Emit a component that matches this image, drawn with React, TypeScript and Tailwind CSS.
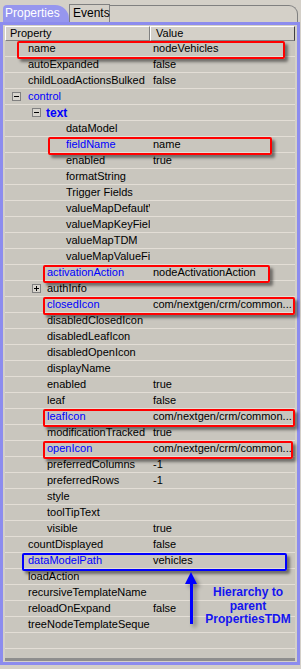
import React from 'react';

type Row = {
  label: string;
  value?: string;
  pad: string;
  blue?: boolean;
  bold?: boolean;
  toggle?: '-' | '+';
  gap?: string;
};

const L0 = 'pl-[23px]';
const L1 = 'pl-[42px]';
const L2 = 'pl-[61px]';
const ICON = 'com/nextgen/crm/common...';

const rows: Row[] = [
  { label: 'name', value: 'nodeVehicles', pad: L0 },
  { label: 'autoExpanded', value: 'false', pad: L0 },
  { label: 'childLoadActionsBulked', value: 'false', pad: L0 },
  { label: 'control', pad: 'pl-[7px]', blue: true, toggle: '-', gap: 'ml-[7px]' },
  { label: 'text', pad: 'pl-[27px]', blue: true, bold: true, toggle: '-', gap: 'ml-[5px]' },
  { label: 'dataModel', pad: L2 },
  { label: 'fieldName', value: 'name', pad: L2, blue: true },
  { label: 'enabled', value: 'true', pad: L2 },
  { label: 'formatString', pad: L2 },
  { label: 'Trigger Fields', pad: L2 },
  { label: 'valueMapDefaultValue', pad: L2 },
  { label: 'valueMapKeyField', pad: L2 },
  { label: 'valueMapTDM', pad: L2 },
  { label: 'valueMapValueField', pad: L2 },
  { label: 'activationAction', value: 'nodeActivationAction', pad: L1, blue: true },
  { label: 'authInfo', pad: 'pl-[27px]', toggle: '+', gap: 'ml-[6px]' },
  { label: 'closedIcon', value: ICON, pad: L1, blue: true },
  { label: 'disabledClosedIcon', pad: L1 },
  { label: 'disabledLeafIcon', pad: L1 },
  { label: 'disabledOpenIcon', pad: L1 },
  { label: 'displayName', pad: L1 },
  { label: 'enabled', value: 'true', pad: L1 },
  { label: 'leaf', value: 'false', pad: L1 },
  { label: 'leafIcon', value: ICON, pad: L1, blue: true },
  { label: 'modificationTracked', value: 'true', pad: L1 },
  { label: 'openIcon', value: ICON, pad: L1, blue: true },
  { label: 'preferredColumns', value: '-1', pad: L1 },
  { label: 'preferredRows', value: '-1', pad: L1 },
  { label: 'style', pad: L1 },
  { label: 'toolTipText', pad: L1 },
  { label: 'visible', value: 'true', pad: L1 },
  { label: 'countDisplayed', value: 'false', pad: L0 },
  { label: 'dataModelPath', value: 'vehicles', pad: L0, blue: true },
  { label: 'loadAction', pad: L0 },
  { label: 'recursiveTemplateName', pad: L0 },
  { label: 'reloadOnExpand', value: 'false', pad: L0 },
  { label: 'treeNodeTemplateSequence', pad: L0 },
  { label: '', pad: L0 },
  { label: '', pad: L0 },
];

// highlight boxes drawn over the grid (page coords)
const marks = [
  { cls: 'left-[17px] top-[41px] w-[268px] border-[#ff0000]' },
  { cls: 'left-[48px] top-[137px] w-[224px] border-[#ff0000]' },
  { cls: 'left-[43px] top-[265px] w-[227px] border-[#ff0000]' },
  { cls: 'left-[43px] top-[297px] w-[252px] border-[#ff0000]' },
  { cls: 'left-[43px] top-[409px] w-[252px] border-[#ff0000]' },
  { cls: 'left-[43px] top-[441px] w-[250px] border-[#ff0000]' },
  { cls: 'left-[22px] top-[553px] w-[265px] border-[#0000ff]' },
];

const Toggle = ({ kind }: { kind: '-' | '+' }) => (
  <span className="relative inline-block w-[9px] h-[9px] border border-[#808080] bg-[#d8d5ce] shrink-0">
    <span className="absolute left-[1px] top-[3px] w-[5px] h-[1px] bg-black" />
    {kind === '+' && <span className="absolute left-[3px] top-[1px] w-[1px] h-[5px] bg-black" />}
  </span>
);

const App: React.FC = () => {
  return (
    <div
      className="relative w-[301px] h-[669px] bg-[#d4d0c8] overflow-hidden text-[11px] text-black"
      style={{ fontFamily: '"Liberation Sans", Arial, sans-serif' }}
    >
      {/* tabs */}
      <div className="flex items-end h-[22px]">
        <div className="ml-[3px] w-[66px] h-[17px] bg-[#9696ee] rounded-tl-[4px] rounded-tr-[14px] pl-[2px] text-white text-[12px] leading-[16px]">
          Properties
        </div>
        <div className="w-[41px] h-[18px] border-t border-l border-r border-[#808080] bg-[#d4d0c8] pl-[3px] text-[12px] leading-[16px]">
          Events
        </div>
        <div className="flex-1 mr-[3px] h-[17px] border-t border-r border-[#808080] rounded-tr-[9px]" />
      </div>

      {/* panel */}
      <div className="w-[300px] h-[643px] border-[3px] border-[#8c8cee] flex flex-col">
        <div className="flex-1 flex flex-col px-[2px] pt-[1px] pb-[1px] bg-[#d4d0c8] overflow-hidden">
          <div className="flex h-[15px] shrink-0">
            <div className="w-[145px] border-t border-l border-white border-b border-r border-b-[#808080] border-r-[#808080] pl-[4px] leading-[13px]">
              Property
            </div>
            <div className="flex-1 border-t border-l border-white border-b border-r border-b-[#808080] border-r-[#404040] pl-[5px] leading-[13px]">
              Value
            </div>
          </div>
          <div className="flex-1 overflow-hidden bg-[#c9c6be] border-b-[3px] border-[#8e8e8e]">
            {rows.map((r, i) => (
              <div key={i} className="flex h-[16px] border-b border-[#e3ded6]">
                <div className={`w-[145px] flex items-center overflow-hidden whitespace-nowrap ${r.pad}`}>
                  {r.toggle && <Toggle kind={r.toggle} />}
                  <span
                    className={`${r.gap ?? ''} ${r.blue ? 'text-[#0000ff]' : ''} ${r.bold ? 'font-bold text-[12px]' : ''}`}
                  >
                    {r.label}
                  </span>
                </div>
                <div className="flex-1 flex items-center pl-[3px] overflow-hidden whitespace-nowrap">
                  {r.value}
                </div>
              </div>
            ))}
          </div>
        </div>
      </div>

      {/* highlight boxes */}
      {marks.map((m, i) => (
        <div
          key={i}
          className={`absolute h-[18px] border-2 rounded-[2px] shadow-[3px_3px_3px_rgba(0,0,0,0.45)] ${m.cls}`}
        />
      ))}

      {/* annotation */}
      <svg
        className="absolute left-[184px] top-[569px] drop-shadow-[3px_3px_2px_rgba(0,0,0,0.4)]"
        width="14"
        height="58"
        viewBox="0 0 14 58"
      >
        <polygon points="7,3 1,15 13,15" fill="#0000ff" />
        <rect x="6" y="14" width="3" height="41" fill="#0000ff" />
      </svg>
      <div className="absolute left-[200px] top-[586px] w-[96px] text-center font-bold text-[12px] leading-[13.5px] text-[#1414f0]">
        Hierarchy to
        <br />
        parent
        <br />
        PropertiesTDM
      </div>
    </div>
  );
};

export default App;
